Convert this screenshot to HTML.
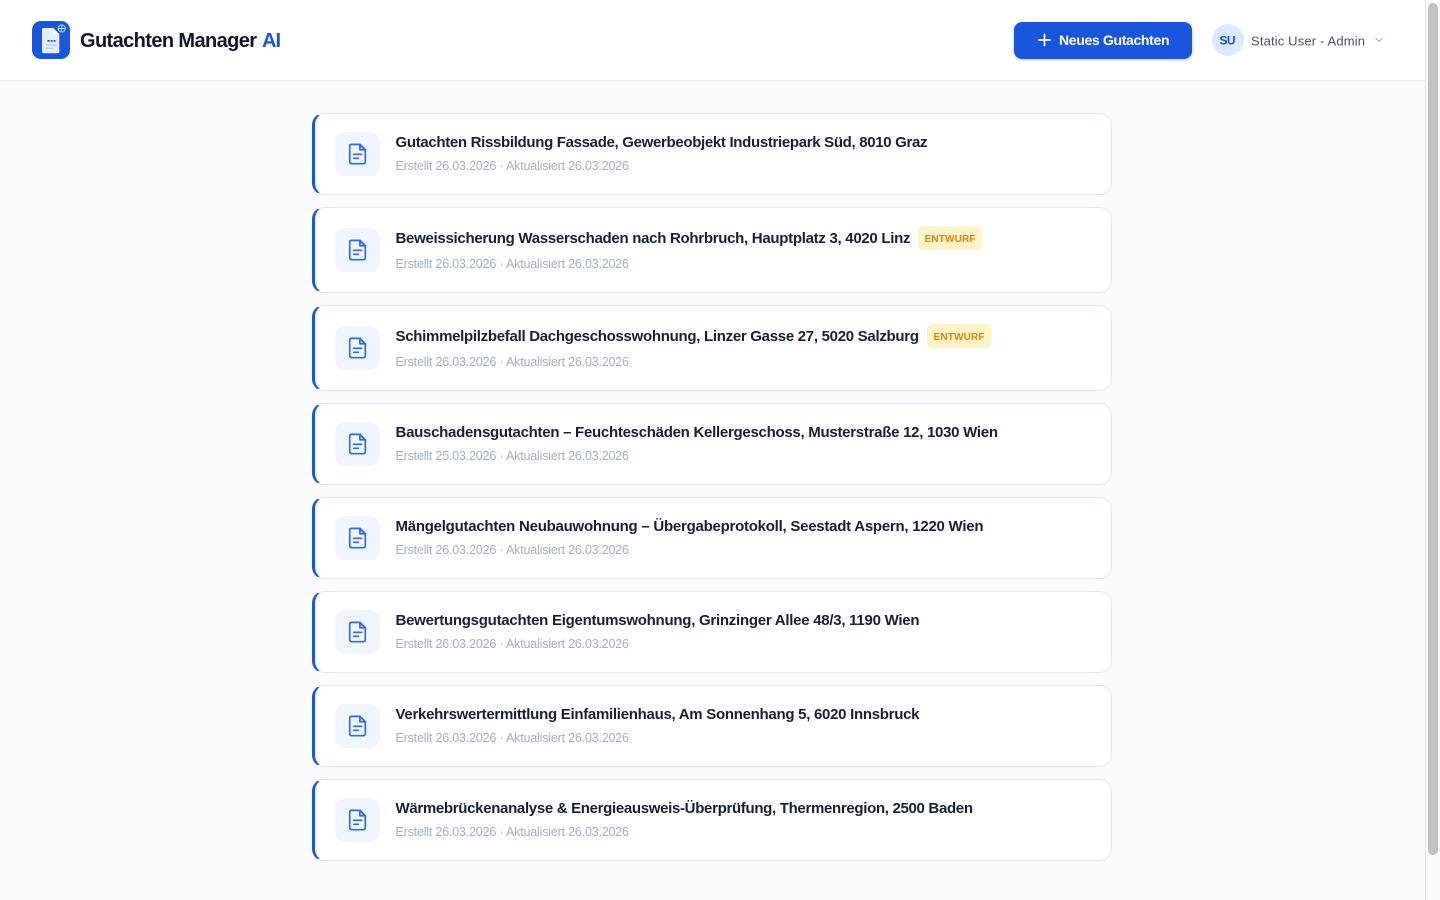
<!DOCTYPE html>
<html lang="de">
<head>
<meta charset="utf-8">
<title>Gutachten Manager AI</title>
<style>
html,body{margin:0;padding:0;width:1440px;height:900px;overflow:hidden;background:#f8fafc;font-family:"Liberation Sans",sans-serif}
.a{position:absolute;box-sizing:border-box}
.header{left:0;top:0;width:1425px;height:81px;background:#fff;border-bottom:1px solid #e2e8f0}
.btn{left:1014px;top:22px;width:178px;height:37px;background:#1a56db;border-radius:8px;box-shadow:0 1px 3px rgba(26,86,219,.3)}
.avatar{left:1212px;top:24px;width:32px;height:32px;border-radius:50%;background:#dbeafe}
.card{left:312px;width:800px;background:#fff;border:1px solid #e2e8f0;border-left:3px solid #1a56db;border-radius:12px}
.ic{left:335px;width:45px;height:44px;background:#eff6ff;border-radius:10px}
.badge{height:24px;width:64px;background:#fef3c7;border-radius:5px}
.track{left:1425px;top:0;width:15px;height:900px;background:#fafafa;border-left:1px solid #e8e8e8}
.thumb{left:1428px;top:3px;width:10px;height:852px;background:#c1c1c1;border-radius:5px}
svg.o{position:absolute;left:0;top:0}
.ti{font:700 15px "Liberation Sans",sans-serif;fill:#172033}
.su{font:400 12.5px "Liberation Sans",sans-serif;fill:#a3b0c2}
.ba{font:700 10px "Liberation Sans",sans-serif;fill:#df860f}
</style>
</head>
<body>
<div class="a header"></div>
<div class="a btn"></div>
<div class="a avatar"></div>

<div class="a card" style="top:113px;height:82px"></div>
<div class="a card" style="top:207px;height:86px"></div>
<div class="a card" style="top:305px;height:86px"></div>
<div class="a card" style="top:403px;height:82px"></div>
<div class="a card" style="top:497px;height:82px"></div>
<div class="a card" style="top:591px;height:82px"></div>
<div class="a card" style="top:685px;height:82px"></div>
<div class="a card" style="top:779px;height:82px"></div>

<div class="a ic" style="top:132px"></div>
<div class="a ic" style="top:228px"></div>
<div class="a ic" style="top:326px"></div>
<div class="a ic" style="top:422px"></div>
<div class="a ic" style="top:516px"></div>
<div class="a ic" style="top:610px"></div>
<div class="a ic" style="top:704px"></div>
<div class="a ic" style="top:798px"></div>

<div class="a badge" style="left:918px;top:226px"></div>
<div class="a badge" style="left:927px;top:324px"></div>

<div class="a track"></div>
<div class="a thumb"></div>

<svg class="o" width="1440" height="900" viewBox="0 0 1440 900" xmlns="http://www.w3.org/2000/svg">
  <defs>
    <g id="doc" fill="none" stroke="#2f6be6" stroke-width="1.7" stroke-linecap="round" stroke-linejoin="round">
      <path d="M-6.2-9.600H2.400L7.800-4.200V7.800A1.900 1.900 0 0 1 5.900 9.700H-5.900A1.900 1.900 0 0 1-7.800 7.800V-8A1.700 1.700 0 0 1-6.200-9.600Z"/>
      <path d="M2.400-9.600V-4.200H7.800Z" fill="#bfdbfe"/>
      <path d="M-3.800 0.300H4.200M-3.800 4.300H0.800"/>
    </g>
  </defs>

  <!-- logo -->
  <rect x="32" y="21" width="38" height="38" rx="9" fill="#1a56db"/>
  <path d="M43.800 28H53L59.300 34V51.500A1.800 1.800 0 0 1 57.500 53.300H43.800A1.800 1.800 0 0 1 42 51.500V29.800A1.800 1.800 0 0 1 43.800 28Z" fill="#e4edfc"/>
  <path d="M53 28V34H59.300Z" fill="#fff"/>
  <rect x="47.500" y="40" width="2" height="1.800" fill="#1a56db"/>
  <rect x="50.500" y="40" width="2" height="1.800" fill="#1a56db"/>
  <rect x="53.500" y="40" width="2" height="1.800" fill="#1a56db"/>
  <path d="M46 45H57M46 48.300H53" stroke="#a9c4f2" stroke-width="1"/>
  <circle cx="61.800" cy="28.500" r="5.800" fill="#1a56db"/>
  <g fill="none" stroke="#cfe0fb" stroke-width=".9">
    <circle cx="61.800" cy="28.500" r="3.600"/>
    <path d="M58.200 28.500H65.400M61.800 24.900V32.100"/>
  </g>
  <text x="80" y="47" font-family="Liberation Sans, sans-serif" font-weight="700" font-size="20" fill="#0f172a" textLength="177" lengthAdjust="spacing">Gutachten Manager</text>
  <text x="262" y="47" font-family="Liberation Sans, sans-serif" font-weight="700" font-size="20" fill="#1a56db" textLength="19" lengthAdjust="spacing">AI</text>

  <!-- header right -->
  <path d="M1044.500 34.500V45.500M1039 40H1050" stroke="#fff" stroke-width="1.700" stroke-linecap="round"/>
  <text x="1059" y="45" font-family="Liberation Sans, sans-serif" font-weight="700" font-size="14" fill="#fff" textLength="110.500" lengthAdjust="spacing">Neues Gutachten</text>
  <text x="1219.500" y="44.500" font-family="Liberation Sans, sans-serif" font-weight="700" font-size="12" fill="#1a56db" textLength="16" lengthAdjust="spacing">SU</text>
  <text x="1251" y="45.500" font-family="Liberation Sans, sans-serif" font-size="13" fill="#475569" textLength="114" lengthAdjust="spacing">Static User - Admin</text>
  <path d="M1376 38.500L1379 41.500L1382 38.500" fill="none" stroke="#a3b0c2" stroke-width="1.200" stroke-linecap="round" stroke-linejoin="round"/>

  <!-- card icons -->
  <use href="#doc" x="357.500" y="154"/>
  <use href="#doc" x="357.500" y="250"/>
  <use href="#doc" x="357.500" y="348"/>
  <use href="#doc" x="357.500" y="444"/>
  <use href="#doc" x="357.500" y="538"/>
  <use href="#doc" x="357.500" y="632"/>
  <use href="#doc" x="357.500" y="726"/>
  <use href="#doc" x="357.500" y="820"/>

  <!-- titles -->
  <text class="ti" x="395.500" y="147" textLength="532" lengthAdjust="spacing">Gutachten Rissbildung Fassade, Gewerbeobjekt Industriepark Süd, 8010 Graz</text>
  <text class="ti" x="395.500" y="243" textLength="515" lengthAdjust="spacing">Beweissicherung Wasserschaden nach Rohrbruch, Hauptplatz 3, 4020 Linz</text>
  <text class="ti" x="395.500" y="341" textLength="523.500" lengthAdjust="spacing">Schimmelpilzbefall Dachgeschosswohnung, Linzer Gasse 27, 5020 Salzburg</text>
  <text class="ti" x="395.500" y="437" textLength="602.500" lengthAdjust="spacing">Bauschadensgutachten – Feuchteschäden Kellergeschoss, Musterstraße 12, 1030 Wien</text>
  <text class="ti" x="395.500" y="531" textLength="588" lengthAdjust="spacing">Mängelgutachten Neubauwohnung – Übergabeprotokoll, Seestadt Aspern, 1220 Wien</text>
  <text class="ti" x="395.500" y="625" textLength="524" lengthAdjust="spacing">Bewertungsgutachten Eigentumswohnung, Grinzinger Allee 48/3, 1190 Wien</text>
  <text class="ti" x="395.500" y="719" textLength="524" lengthAdjust="spacing">Verkehrswertermittlung Einfamilienhaus, Am Sonnenhang 5, 6020 Innsbruck</text>
  <text class="ti" x="395.500" y="813" textLength="577.500" lengthAdjust="spacing">Wärmebrückenanalyse &amp; Energieausweis-Überprüfung, Thermenregion, 2500 Baden</text>

  <!-- subtitles -->
  <text class="su" x="395.500" y="170" textLength="233.500" lengthAdjust="spacing">Erstellt 26.03.2026 · Aktualisiert 26.03.2026</text>
  <text class="su" x="395.500" y="268" textLength="233.500" lengthAdjust="spacing">Erstellt 26.03.2026 · Aktualisiert 26.03.2026</text>
  <text class="su" x="395.500" y="366" textLength="233.500" lengthAdjust="spacing">Erstellt 26.03.2026 · Aktualisiert 26.03.2026</text>
  <text class="su" x="395.500" y="460" textLength="233.500" lengthAdjust="spacing">Erstellt 25.03.2026 · Aktualisiert 26.03.2026</text>
  <text class="su" x="395.500" y="554" textLength="233.500" lengthAdjust="spacing">Erstellt 26.03.2026 · Aktualisiert 26.03.2026</text>
  <text class="su" x="395.500" y="648" textLength="233.500" lengthAdjust="spacing">Erstellt 26.03.2026 · Aktualisiert 26.03.2026</text>
  <text class="su" x="395.500" y="742" textLength="233.500" lengthAdjust="spacing">Erstellt 26.03.2026 · Aktualisiert 26.03.2026</text>
  <text class="su" x="395.500" y="836" textLength="233.500" lengthAdjust="spacing">Erstellt 26.03.2026 · Aktualisiert 26.03.2026</text>

  <!-- badges -->
  <text class="ba" x="924.500" y="242" textLength="51" lengthAdjust="spacing">ENTWURF</text>
  <text class="ba" x="933.500" y="340" textLength="51" lengthAdjust="spacing">ENTWURF</text>
</svg>
</body>
</html>
